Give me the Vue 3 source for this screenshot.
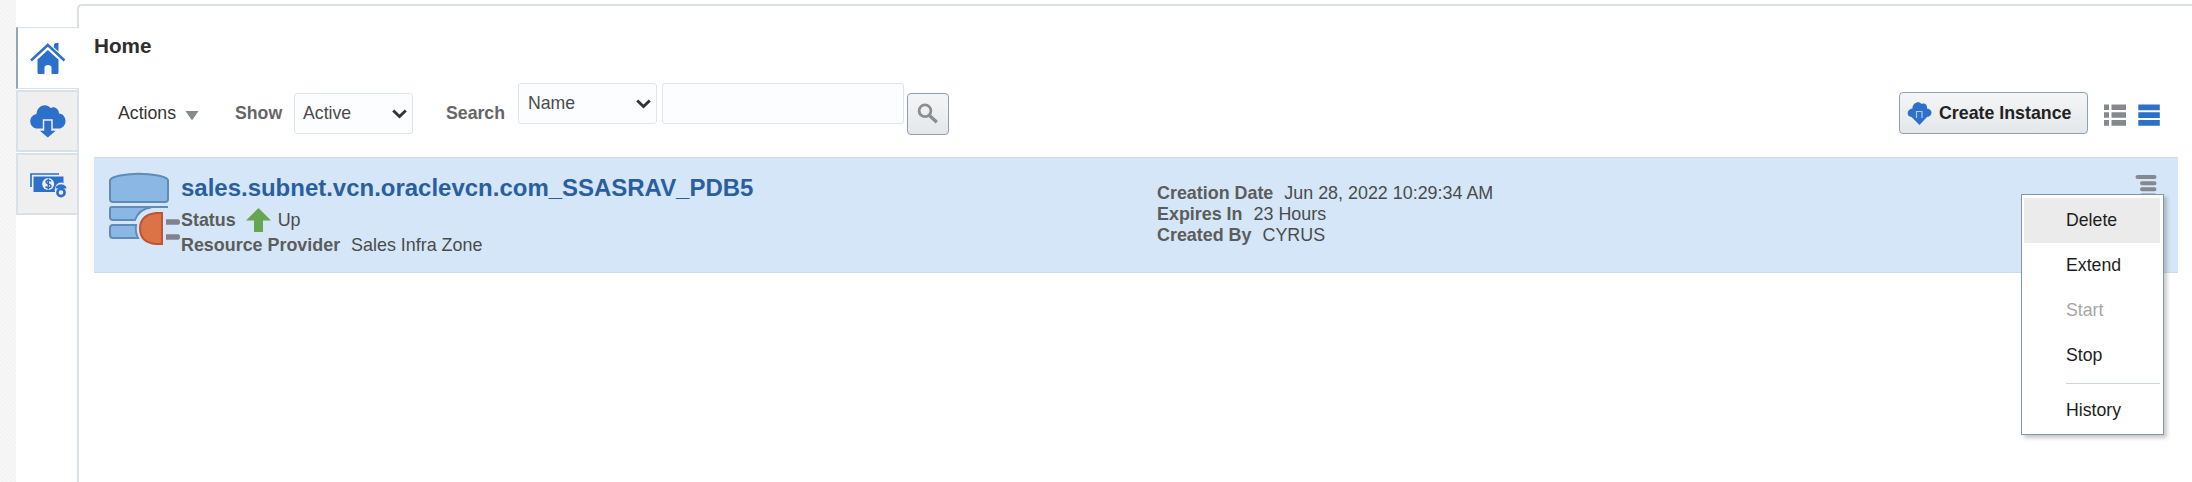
<script setup>
const menu = [
  { label: 'Delete', state: 'hover' },
  { label: 'Extend', state: '' },
  { label: 'Start', state: 'disabled' },
  { label: 'Stop', state: '' },
]
const details = [
  { label: 'Creation Date', value: 'Jun 28, 2022 10:29:34 AM' },
  { label: 'Expires In', value: '23 Hours' },
  { label: 'Created By', value: 'CYRUS' },
]
</script>

<template>
  <div class="page">
    <div class="strip"></div>
    <nav class="tabs">
      <div class="tab active">
        <svg width="36" height="34" viewBox="0 0 36 34" fill="#2d70c9">
          <path d="M24 2.500q0-1.500 4.500-1.700v8.700L24 5.500z" />
          <path d="M1 18.500 17.800 3 34.500 18.500" fill="none" stroke="#2d70c9" stroke-width="2.500" />
          <path d="M7.500 17.500 17.800 8 28.500 17.500v13q0 1.500-1.500 1.500h-5.500v-6.500q0-2.500-3.500-2.500t-3.500 2.500v6.500H9q-1.500 0-1.500-1.500z" />
        </svg>
      </div>
      <div class="tab">
        <svg width="38" height="36" viewBox="0 0 38 36" fill="#2d70c9">
          <path d="M7 24.500C-.5 22.500-1 12 7.500 10 8 2 17-1.500 21.500 4c4-2 8 .5 8.500 5.500 8 .5 9 13 1 15z" />
          <path d="M14.500 16h8.500v10h5.500l-9.700 8.500-9.800-8.500h5.500z" stroke="#efeff0" stroke-width="1.500" />
        </svg>
      </div>
      <div class="tab">
        <svg width="38" height="28" viewBox="0 0 38 28">
          <path d="M2 16V3h28" fill="none" stroke="#2d70c9" stroke-width="1.700" />
          <path d="M4.500 5.500h30V21h-30z" fill="#2d70c9" />
          <circle cx="19.200" cy="13" r="6" fill="#efeff0" />
          <path d="M22 10.500c-1-2-5-1.600-5 .5 0 2.500 5 1.500 5 4 0 2-4 2.500-5.500.5M19.300 7.500v11" fill="none" stroke="#2d70c9" stroke-width="1.500" />
          <ellipse cx="32" cy="19" rx="6.300" ry="7.500" fill="#efeff0" />
          <path d="M27 15.500q5-4.500 10 0l.5 2h-11z" fill="#2d70c9" />
          <circle cx="32" cy="21.500" r="3.600" fill="none" stroke="#2d70c9" stroke-width="2.600" />
        </svg>
      </div>
    </nav>
    <main class="panel">
      <h1>Home</h1>
      <div class="toolbar">
        <span class="text actions">Actions</span>
        <svg class="caret" width="14" height="10" viewBox="0 0 14 10"><path d="M.5 0h13L7 9.500z" fill="#858a8d" /></svg>
        <label class="text show">Show</label>
        <div class="select status">
          Active
          <svg width="15" height="10" viewBox="0 0 15 10"><path d="M1.200 1.500 7.500 7.500l6.300-6" fill="none" stroke="#333" stroke-width="2.900" /></svg>
        </div>
        <label class="text search-label">Search</label>
        <div class="select field">
          Name
          <svg width="15" height="10" viewBox="0 0 15 10"><path d="M1.200 1.500 7.500 7.500l6.300-6" fill="none" stroke="#333" stroke-width="2.900" /></svg>
        </div>
        <input class="query" type="text" />
        <button class="search-button" type="button">
          <svg width="22" height="22" viewBox="0 0 22 22" fill="none" stroke="#8b8e90">
            <circle cx="8" cy="7.800" r="5.900" stroke-width="2.800" />
            <path d="m12.500 12.500 7.300 6.800" stroke-width="3.400" />
          </svg>
        </button>
        <button class="create" type="button">
          <svg width="25" height="23" viewBox="0 0 25 23">
            <path d="M4.500 15C-1.500 14 0 7 5.500 6.500 5 1 12-2 14.500 2c4-1.500 6 1.500 5.500 4.500 6 1 6 7.500 0 8.500l-7.500 8z" fill="#2d70c9" />
            <path d="M9.500 16V9.500h5.500V16" fill="none" stroke="#a9c8ec" stroke-width="1.200" />
          </svg>
          Create Instance
        </button>
        <svg class="view-list" width="22" height="22" viewBox="0 0 22 22" fill="#85898d">
          <path d="M0 .5h5v5.500H0zM7.500.5H22v5.500H7.500zM0 8.300h5v5.500H0zM7.500 8.300H22v5.500H7.500zM0 16h5v5.700H0zM7.500 16H22v5.700H7.500z" />
        </svg>
        <svg class="view-rows" width="22" height="22" viewBox="0 0 22 22" fill="#2d70c9">
          <path d="M.3.5h21.500v5.800H.3zM.3 8.200h21.500v5.800H.3zM.3 15.900h21.500v5.800H.3z" />
        </svg>
      </div>
      <section class="instance">
        <svg class="database" width="74" height="76" viewBox="0 0 74 76">
          <g fill="#8ab7e4" stroke="#5f8bb6" stroke-width="2">
            <path d="M2 9Q4 6 12 4.500q19-3.500 38 0 8 1.500 10 4.500v19q0 3-3 3H5q-3 0-3-3z" />
            <path d="M60 36H4q-2 0-2 2v8q0 3 3 3h22q4-11 16-12.500" />
            <path d="M28 54H5q-3 0-3 3v7q0 3 3 3h25q-3-6-2-13z" />
          </g>
          <path d="M55 42H48q-16 3-16 16t16 15h7z" fill="none" stroke="#d4e6f8" stroke-width="5" />
          <path d="M54 42h-6q-16 2-16 15.500 0 14 16 15.500h6z" fill="#dc7346" stroke="#bd5532" stroke-width="2" />
          <path d="M58 48.200h12q2 0 2 2.800t-2 2.800H58zM58 63.200h12q2 0 2 2.800t-2 2.800H58z" fill="#80828f" />
        </svg>
        <div class="summary">
          <a class="title">sales.subnet.vcn.oraclevcn.com_SSASRAV_PDB5</a>
          <div class="status-line">
            <b>Status</b>
            <svg width="25" height="24" viewBox="0 0 25 24"><path d="M12.500 0 25 12.500h-8V24H8V12.500H0z" fill="#67a650" /></svg>
            <span>Up</span>
          </div>
          <div class="provider"><b>Resource Provider</b><span>Sales Infra Zone</span></div>
        </div>
        <div class="details">
          <div v-for="d in details" :key="d.label" class="detail"><b>{{ d.label }}</b><span>{{ d.value }}</span></div>
        </div>
        <div class="menu-anchor">
          <svg width="22" height="22" viewBox="0 0 22 22" stroke="#85898d" stroke-width="4" stroke-linecap="round">
            <path d="M2.500 3h17M7 9.200h12.500M7 15.200h12.500M7 21.400h12.500" />
          </svg>
          <div class="menu">
            <div v-for="m in menu" :key="m.label" class="item" :class="m.state">{{ m.label }}</div>
            <div class="separator"></div>
            <div class="item">History</div>
          </div>
        </div>
      </section>
    </main>
  </div>
</template>

<style>
body { margin: 0; background: #fff; }
</style>

<style scoped>
* { box-sizing: border-box; }
.page {
  display: flex;
  width: 2192px;
  height: 482px;
  overflow: hidden;
  font-family: "Liberation Sans", Arial, sans-serif;
  font-size: 17.700px;
  color: #4b4b4b;
}
svg { display: block; flex: none; }
.strip {
  width: 16px;
  background: repeating-linear-gradient(45deg, #f7f7f7 0, #f7f7f7 1.500px, #f1f1f1 2.200px, #f7f7f7 3px);
}
.tabs { width: 61px; padding-top: 27px; }
.tab {
  display: flex;
  align-items: center;
  justify-content: center;
  height: 62px;
  margin-bottom: 1px;
  border: 2px solid #d9e1e8;
  border-right-width: 0;
  background: #efeff0;
}
.tab.active {
  position: relative;
  width: 63px;
  border-left-color: #91a7bd;
  border-top-width: 1px;
  border-bottom-width: 1px;
  background: #fff;
}
.tab svg { margin-top: 1px; }
.tab.active svg { margin: 2px 2px 0 0; }
.panel {
  width: 2115px;
  margin-top: 4px;
  border-left: 2px solid #d9e1e8;
  border-top: 2px solid #d9e1e8;
  border-top-left-radius: 5px;
}
h1 {
  margin: 28px 0 0 15px;
  font-size: 20.700px;
  line-height: 24px;
  color: #2e2e2e;
}
.toolbar {
  display: flex;
  align-items: flex-start;
  height: 75px;
  margin-top: 24px;
}
.text { margin-top: 21px; line-height: 20px; }
.actions { width: 60px; margin-left: 39px; color: #333; }
.caret { margin: 29px 0 0 7px; }
.show { width: 59px; margin-left: 36px; font-weight: bold; color: #666; }
.select {
  display: flex;
  align-items: center;
  justify-content: space-between;
  height: 41px;
  padding: 0 5px 0 8px;
  border: 1px solid #dfe5e9;
  border-radius: 3px;
  background: #fcfdff;
}
.status { width: 119px; margin-top: 11px; }
.search-label { width: 71px; margin-left: 33px; font-weight: bold; color: #666; }
.field { width: 139px; margin-left: 1px; padding-left: 9px; margin-top: 1px; }
.query {
  width: 242px;
  height: 41px;
  margin: 1px 0 0 5px;
  border: 1px solid #dfe5e9;
  border-radius: 3px;
  background: #fcfdff;
}
button {
  display: flex;
  align-items: center;
  height: 42px;
  padding: 0;
  border: 1px solid #8ba1b6;
  border-radius: 4px;
  background: linear-gradient(#f4f5f6, #e4e7ea);
  font: bold 17.800px "Liberation Sans", Arial, sans-serif;
  color: #222;
}
.search-button { justify-content: center; width: 42px; margin: 11px 0 0 3px; }
.create { width: 189px; margin: 10px 0 0 950px; padding-left: 7px; gap: 7px; white-space: nowrap; }
.view-list { margin: 22px 0 0 16px; }
.view-rows { margin: 22px 0 0 12px; }
.instance {
  display: flex;
  width: 2084px;
  height: 116px;
  margin-left: 15px;
  border-top: 1px solid #cbdcec;
  border-bottom: 1px solid #cbdcec;
  background: #d4e6f8;
  font-size: 17.900px;
}
.database { margin: 13px 0 0 14px; }
.summary { flex: none; width: 977px; margin-left: -1px; }
.title {
  display: block;
  margin-top: 16px;
  font-size: 23.970px;
  line-height: 28px;
  font-weight: bold;
  color: #2a5f9f;
}
.status-line { display: flex; align-items: center; height: 26px; margin-top: 5px; }
.status-line svg { margin: 0 7px 0 10px; }
.provider { line-height: 24px; }
b { color: #5c5c5c; }
.provider span, .detail span { margin-left: 11px; }
.details { padding-top: 25px; margin-left: -1px; }
.detail { line-height: 21px; }
.menu-anchor { position: relative; width: 22px; height: 22px; margin: 16px 21px 0 auto; }
.menu {
  position: absolute;
  right: -7px;
  top: 20px;
  width: 143px;
  height: 241px;
  padding: 3px 3px 0 2px;
  border: 1px solid #7d98b2;
  background: #fff;
  box-shadow: 3px 3px 4px rgba(0, 0, 0, .22);
  color: #1d1d1d;
  font-size: 17.700px;
}
.item { height: 45px; padding-left: 42px; line-height: 45px; }
.item.hover { background: #ebebec; }
.item.disabled { color: #a7a7a7; }
.separator { height: 1px; margin: 5px 0 4px 42px; background: #c9d5e0; }
</style>
